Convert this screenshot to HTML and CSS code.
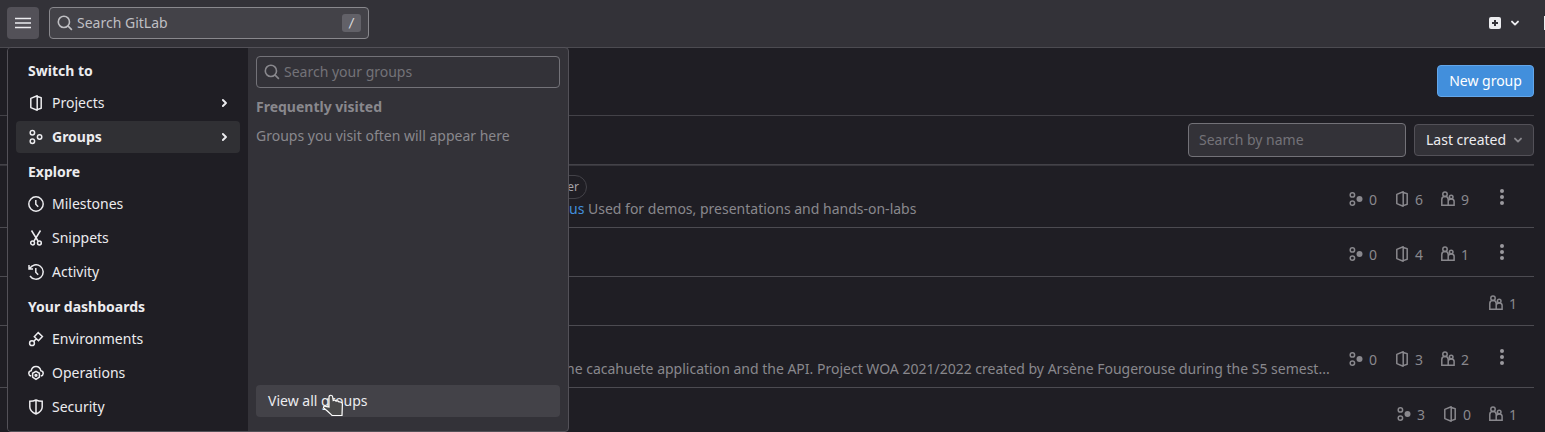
FILE: index.html
```html
<!DOCTYPE html>
<html lang="en">
<head>
<meta charset="utf-8">
<title>Groups · GitLab</title>
<link rel="stylesheet" href="styles.css">
</head>
<body>
<svg class="sprite" aria-hidden="true">
  <symbol id="search" viewBox="0 0 16 16"><g stroke-width="1.600"><circle cx="6.900" cy="6.900" r="5.600"/><path d="M10.900 10.900l4 4"/></g></symbol>
  <symbol id="project" viewBox="0 0 16 16"><path stroke-linejoin="round" d="M9.200.8L2.800 3.400v9.200l6.400 2.600zM9.200 1.400l4 1.300v10.600l-4 1.300"/></symbol>
  <symbol id="group" viewBox="0 0 16 16"><circle cx="4.400" cy="3.700" r="2.200"/><circle cx="4.400" cy="12.300" r="2.200"/><circle cx="11.600" cy="8" r="2.200"/></symbol>
  <symbol id="subgroup" viewBox="0 0 16 16"><circle cx="4.400" cy="3.900" r="2.200"/><circle cx="4.400" cy="12.100" r="2.200"/><circle cx="11.500" cy="8" r="3" fill="currentColor" stroke="none"/></symbol>
  <symbol id="clock" viewBox="0 0 16 16"><circle cx="8" cy="8" r="7.200"/><path d="M7.800 4v4.300l2.400 2.400"/></symbol>
  <symbol id="snippet" viewBox="0 0 16 16"><path d="M3.500 0.500L10 11M12.500 0.500L6 11"/><circle cx="4.600" cy="13" r="1.900"/><circle cx="11.400" cy="13" r="1.900"/></symbol>
  <symbol id="history" viewBox="0 0 16 16"><path d="M1 1v4h4M1.600 4.600A7.200 7.200 0 1 1 2 12M7.800 4v4.300l2.400 2.400"/></symbol>
  <symbol id="environment" viewBox="0 0 16 16"><circle cx="4" cy="12.200" r="2.400"/><path d="M10.200 1.600l4.200 3.900-3.900 4.200-4.200-3.900zM5.800 10.400l2.300-2.600"/></symbol>
  <symbol id="cloud" viewBox="0 0 16 16"><path d="M3.200 11C1.500 10.500.8 9.500.8 8.400c0-1.500 1-2.500 2.400-2.700C3.700 3 5.600 1.500 8 1.500s4.300 1.500 4.800 4.200c1.400.2 2.400 1.200 2.400 2.700 0 1.100-.7 2.100-2.400 2.600M8 6.300l3.400 2v3.900L8 14.300l-3.400-2.100V8.300z"/><circle cx="8" cy="10.300" r=".9"/></symbol>
  <symbol id="shield" viewBox="0 0 16 16"><path d="M8 1c2 1 4.300 1.300 6.200 1.300V8c0 3.200-2.700 5.500-6.200 7-3.500-1.500-6.200-3.800-6.200-7V2.300C3.700 2.300 6 2 8 1zM8 1v14"/></symbol>
  <symbol id="users" viewBox="0 0 16 16"><circle cx="5" cy="3.300" r="2.200"/><path d="M8.500 14.300H1.800V8.500C1.800 6.500 3.200 5.500 5 5.500s3.200 1 3.200 3v5.800h5.900v-4c0-1.500-1.200-2.400-2.900-2.400s-3 .9-3 2.400"/><circle cx="11.200" cy="6" r="1.800"/></symbol>
  <symbol id="right" viewBox="0 0 16 16"><path d="M6.900 5l3.100 3-3.100 3"/></symbol>
  <symbol id="down" viewBox="0 0 16 16"><path d="M5 6.600l3 3 3-3"/></symbol>
  <symbol id="kebab" viewBox="0 0 16 16"><g fill="currentColor" stroke="none"><circle cx="8" cy="2" r="2"/><circle cx="8" cy="8" r="2"/><circle cx="8" cy="14" r="2"/></g></symbol>
</svg>

<header class="topbar">
  <button class="burger" aria-label="Menu"><svg class="icon" viewBox="0 0 16 16"><path d="M0 3.500h16M0 8h16M0 12.500h16"/></svg></button>
  <div class="search"><svg class="icon"><use href="#search"/></svg><span class="search-text">Search GitLab</span><kbd class="key">/</kbd></div>
  <div class="actions">
    <svg class="plus" viewBox="0 0 12 12"><rect width="12" height="12" rx="2"/><path d="M6 3v6M3 6h6"/></svg>
    <svg class="icon chevron"><use href="#down"/></svg>
    <span class="edge"></span>
  </div>
</header>

<main class="page">
  <div class="title-row"><button class="new">New group</button></div>
  <div class="filters">
    <div class="name-filter">Search by name</div>
    <div class="sort">Last created<svg class="icon chevron"><use href="#down"/></svg></div>
  </div>
  <ul class="groups">
    <li class="row tall">
      <div class="info"><div class="badge-line"><span class="badge">Owner</span></div><div class="desc first"><a class="link">us</a> Used for demos, presentations and hands-on-labs</div></div>
      <div class="stats"><span class="stat"><svg class="icon"><use href="#subgroup"/></svg><b>0</b></span><span class="stat"><svg class="icon"><use href="#project"/></svg><b>6</b></span><span class="stat"><svg class="icon"><use href="#users"/></svg><b>9</b></span></div>
      <div class="more"><svg class="icon"><use href="#kebab"/></svg></div>
    </li>
    <li class="row">
      <div class="stats"><span class="stat"><svg class="icon"><use href="#subgroup"/></svg><b>0</b></span><span class="stat"><svg class="icon"><use href="#project"/></svg><b>4</b></span><span class="stat"><svg class="icon"><use href="#users"/></svg><b>1</b></span></div>
      <div class="more"><svg class="icon"><use href="#kebab"/></svg></div>
    </li>
    <li class="row">
      <div class="stats"><span class="stat"><svg class="icon"><use href="#users"/></svg><b>1</b></span></div>
    </li>
    <li class="row tall">
      <div class="info"><div class="badge-line"></div><div class="desc last">he cacahuete application and the API. Project WOA 2021/2022 created by Arsène Fougerouse during the S5 semest...</div></div>
      <div class="stats"><span class="stat"><svg class="icon"><use href="#subgroup"/></svg><b>0</b></span><span class="stat"><svg class="icon"><use href="#project"/></svg><b>3</b></span><span class="stat"><svg class="icon"><use href="#users"/></svg><b>2</b></span></div>
      <div class="more"><svg class="icon"><use href="#kebab"/></svg></div>
    </li>
    <li class="row">
      <div class="stats"><span class="stat"><svg class="icon"><use href="#subgroup"/></svg><b>3</b></span><span class="stat"><svg class="icon"><use href="#project"/></svg><b>0</b></span><span class="stat"><svg class="icon"><use href="#users"/></svg><b>1</b></span></div>
    </li>
  </ul>
</main>

<div class="menu">
  <nav class="nav">
    <h2 class="heading">Switch to</h2>
    <a class="item"><svg class="icon"><use href="#project"/></svg>Projects<svg class="icon chevron"><use href="#right"/></svg></a>
    <a class="item active"><svg class="icon"><use href="#group"/></svg>Groups<svg class="icon chevron"><use href="#right"/></svg></a>
    <h2 class="heading">Explore</h2>
    <a class="item"><svg class="icon"><use href="#clock"/></svg>Milestones</a>
    <a class="item"><svg class="icon"><use href="#snippet"/></svg>Snippets</a>
    <a class="item"><svg class="icon"><use href="#history"/></svg>Activity</a>
    <h2 class="heading">Your dashboards</h2>
    <a class="item"><svg class="icon"><use href="#environment"/></svg>Environments</a>
    <a class="item"><svg class="icon"><use href="#cloud"/></svg>Operations</a>
    <a class="item"><svg class="icon"><use href="#shield"/></svg>Security</a>
  </nav>
  <section class="panel">
    <div class="panel-search"><svg class="icon"><use href="#search"/></svg><span>Search your groups</span></div>
    <h3 class="panel-heading">Frequently visited</h3>
    <p class="empty">Groups you visit often will appear here</p>
    <a class="view-all">View all groups</a>
  </section>
</div>
<svg class="pointer" viewBox="0 0 22 24"><path d="M7 13V3.200c0-2.600 3.300-2.600 3.700 0l.5 3.300c1-.7 2.400-.4 2.800.6 1.200-.5 2.400-.1 2.900.8 1.500-.4 3.200.4 3.500 2.100l-.4 11.500H10.100C8 19.500 5.500 17 2 14.300c-1.300-1.300 0-2.500 1.500-2z"/></svg>
</body>
</html>
```

FILE: styles.css
```css
* { box-sizing: border-box; }
body {
  margin: 0;
  height: 432px;
  overflow: hidden;
  position: relative;
  background: #1f1e24;
  color: #ececef;
  font: 14px/20px "Noto Sans", sans-serif;
}
.sprite { position: absolute; width: 0; height: 0; }
.icon {
  width: 16px;
  height: 16px;
  flex: none;
  fill: none;
  stroke: currentColor;
  stroke-width: 1.5;
}
.chevron { stroke-width: 1.900; stroke-linecap: round; stroke-linejoin: round; }
button { font: inherit; padding: 0; }

.topbar {
  height: 48px;
  padding: 7px 0 0 7px;
  display: flex;
  align-items: flex-start;
  background: #333238;
  border-bottom: 1px solid #4c4b51;
}
.burger {
  width: 32px;
  height: 32px;
  margin-right: 10px;
  display: flex;
  align-items: center;
  justify-content: center;
  border: 0;
  border-radius: 4px;
  background: #535158;
  color: #ececef;
}
.search {
  width: 320px;
  height: 32px;
  padding: 0 7px;
  display: flex;
  align-items: center;
  background: #434248;
  border: 1px solid #89888d;
  border-radius: 4px;
  color: #bfbfc3;
}
.search-text { margin-left: 4px; flex: 1; }
.key {
  width: 19px;
  height: 18px;
  border-radius: 3px;
  background: #626168;
  color: #dcdcde;
  font: 12px/18px "DejaVu Sans Mono", monospace;
  text-align: center;
}
.actions { height: 32px; margin-left: auto; display: flex; align-items: center; }
.plus { width: 12px; height: 12px; fill: #ececef; stroke: #333238; stroke-width: 2; }
.plus rect { stroke: none; }
.actions .chevron { margin-left: 6px; }
.edge { width: 1px; height: 14px; margin-left: 21px; background: #ececef; }

.page { padding-right: 11px; }
.title-row {
  height: 68px;
  padding-top: 17px;
  display: flex;
  justify-content: flex-end;
  align-items: flex-start;
  border-bottom: 1px solid #434248;
}
.new {
  width: 97px;
  height: 32px;
  background: #428fdc;
  border: 1px solid #63a6e9;
  border-radius: 4px;
  color: #fff;
}
.filters {
  height: 49px;
  display: flex;
  justify-content: flex-end;
  align-items: center;
  gap: 8px;
  border-bottom: 1px solid #434248;
}
.name-filter {
  width: 218px;
  height: 34px;
  padding: 6px 10px;
  background: #333238;
  border: 1px solid #737278;
  border-radius: 4px;
  color: #737278;
}
.sort {
  width: 120px;
  height: 32px;
  padding: 0 7px 0 11px;
  display: flex;
  align-items: center;
  justify-content: space-between;
  background: #333238;
  border: 1px solid #535158;
  border-radius: 4px;
}
.sort .chevron { color: #89888d; }
.groups { margin: 0; padding: 0; list-style: none; border-top: 1px solid #37363c; }
.row {
  height: 49px;
  padding-right: 16px;
  display: flex;
  align-items: center;
  justify-content: flex-end;
  border-bottom: 1px solid #4c4b51;
  color: #89888d;
}
.tall { height: 62px; }
.info { flex: 1; min-width: 0; height: 61px; padding-top: 9px; }
.badge-line { height: 24px; width: 587px; display: flex; justify-content: flex-end; }
.badge {
  height: 24px;
  padding: 0 7px;
  border: 1px solid #434248;
  border-radius: 12px;
  color: #a4a3a8;
  font-size: 12px;
  line-height: 22px;
}
.desc { white-space: nowrap; }
.first { padding-left: 569px; }
.last { padding-left: 566px; }
.link { color: #428fdc; }
.stats { display: flex; gap: 17px; padding-top: 4px; }
.tall .stats { padding-top: 5px; }
.row:not(:has(.more)) .stats { padding-right: 1px; }
.stat { display: flex; gap: 5px; }
.stat b { width: 8px; font-weight: 400; padding-top: 1px; line-height: 16px; }
.more { width: 32px; margin-left: 17px; display: flex; justify-content: center; }
.more .icon { color: #9a999e; }

.menu {
  position: absolute;
  left: 7px;
  top: 47px;
  width: 562px;
  height: 385px;
  display: flex;
  border: 1px solid #535158;
  border-radius: 4px;
  overflow: hidden;
  background: #333238;
}
.nav { width: 240px; padding: 6px 8px; background: #1f1e24; }
.heading { margin: 0; padding: 7px 12px 5px; height: 33px; font-size: 14px; line-height: 20px; }
.item {
  height: 32px;
  margin-bottom: 2px;
  padding: 0 8px 0 12px;
  display: flex;
  align-items: center;
  gap: 8px;
  border-radius: 4px;
}
.item .chevron { margin-left: auto; }
.active { background: #303034; font-weight: 700; }
.panel { flex: 1; padding: 8px; display: flex; flex-direction: column; }
.panel-search {
  height: 32px;
  padding: 0 7px;
  display: flex;
  align-items: center;
  gap: 4px;
  border: 1px solid #737278;
  border-radius: 4px;
  color: #737278;
}
.panel-search .icon { color: #89888d; }
.panel-heading { margin: 9px 0 0; font-size: 14px; line-height: 20px; color: #89888d; }
.empty { margin: 9px 0 0; color: #89888d; }
.view-all {
  height: 32px;
  margin: auto 0 6px;
  padding: 6px 12px;
  background: #434248;
  border-radius: 4px;
}
.pointer {
  position: absolute;
  left: 322px;
  top: 394px;
  width: 22px;
  height: 24px;
  fill: #4a4a4a;
  stroke: #fff;
  stroke-width: 1.200;
}
```
